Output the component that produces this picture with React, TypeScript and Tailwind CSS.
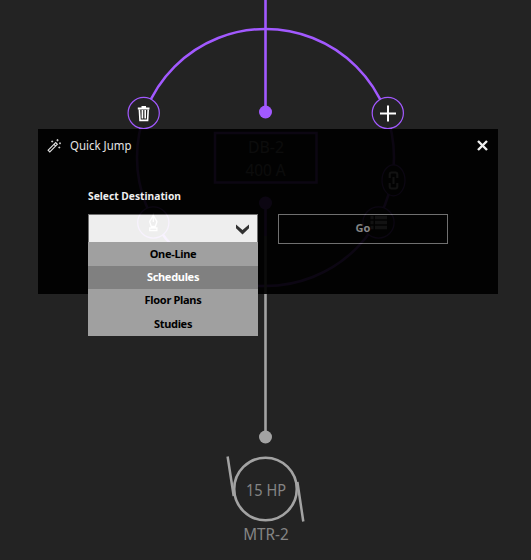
const purple = '#a259ff';
const gray = '#a3a3a3';

function Diagram() {
  return (
    <svg className="absolute inset-0" width="531" height="560" viewBox="0 0 531 560" fill="none">
      <circle cx="265.5" cy="157.5" r="128.5" stroke={purple} strokeWidth="2.5" />
      <path d="M265.5 0V112M265.5 203V236" stroke={purple} strokeWidth="2.6" />
      <circle cx="265.5" cy="112" r="6.5" fill={purple} />
      <circle cx="265.5" cy="203" r="6.5" fill={purple} />
      <rect x="215" y="133" width="101.5" height="49.5" fill="#232323" stroke={purple} strokeWidth="2.5" />
      <path d="M265.5 236V437" stroke={gray} strokeWidth="2.6" />
      <circle cx="265.5" cy="437" r="6.5" fill={gray} />
      <circle cx="265.5" cy="489" r="31.3" stroke={gray} strokeWidth="2.6" />
      <path d="M227.6 456.5L233.7 496M297.4 482L303.3 521.5" stroke={gray} strokeWidth="2.5" />
      <g fontFamily="'Noto Sans', sans-serif" fontSize="15.5" textAnchor="middle" fill="#858585">
        <text x="266" y="152.5" fill="#a3a3a3" textLength="36" lengthAdjust="spacingAndGlyphs">DB-2</text>
        <text x="265.5" y="176" fill="#a3a3a3" textLength="40" lengthAdjust="spacingAndGlyphs">400 A</text>
        <text x="266" y="495.5" textLength="40" lengthAdjust="spacingAndGlyphs">15 HP</text>
        <text x="266" y="540" textLength="45.5" lengthAdjust="spacingAndGlyphs">MTR-2</text>
      </g>
      <g fill="#232323" stroke={purple} strokeWidth="1.2">
        <circle cx="143.7" cy="113" r="15.6" />
        <circle cx="387.8" cy="113" r="15.6" />
        <circle cx="153.3" cy="222.5" r="15.6" />
        <circle cx="378.5" cy="222.5" r="15.6" />
        <ellipse cx="393.5" cy="180.3" rx="11.5" ry="15.5" />
      </g>
      <g stroke="#fff">
        <path d="M137.8 108.5H149.5M141.5 107H146" strokeWidth="1.8" />
        <path d="M139.4 109.5L140 120.4H147.6L148.2 109.5M142.4 110V118.5M145.2 110V118.5" strokeWidth="1.6" />
        <path d="M380 113.5H396M388 105.5V121.5" strokeWidth="2" />
        <path d="M153.3 215C152.5 218 149.7 220 149.7 222L151.3 226.5H155.3L156.9 222C156.9 220 154.1 218 153.3 215ZM153.3 217V222M149.7 228H156.9V230.5H149.7Z" strokeWidth="1.3" />
        <path d="M389.7 178V174.5Q389.7 172.5 391.7 172.5H395.3Q397.3 172.5 397.3 174.5V178M389.7 183V186.5Q389.7 188.5 391.7 188.5H395.3Q397.3 188.5 397.3 186.5V183M393.5 177V184" strokeWidth="2" />
        <path d="M370.5 217.5H373.5M370.5 222.5H373.5M370.5 227.5H373.5M375 217.5H387M375 222.5H387M375 227.5H387" strokeWidth="3.5" />
      </g>
    </svg>
  );
}

const options = ['One-Line', 'Schedules', 'Floor Plans', 'Studies'];

export default function App() {
  return (
    <main className="relative h-[560px] w-[531px] overflow-hidden bg-[#232323] pt-[129px] pl-[38px] font-['Noto_Sans',sans-serif]">
      <Diagram />
      <section className="relative h-[164.5px] w-[460px]">
        <div className="h-full w-full bg-black text-white opacity-[.925]">
          <header className="flex h-[33px] items-center pr-[10px] pl-[9px]">
            <svg width="15" height="15" viewBox="0 0 15 15" fill="none" stroke="#eee">
              <path d="M1.2 12.2L8.7 4.7L10.3 6.3L2.8 13.8ZM7 6.4L8.6 8" strokeWidth="1.2" />
              <path d="M5.2 2.5V4.500M4.200 3.500H6.200M10.500 1V3.400M9.300 2.200H11.700M13 4.300V6.300M12 5.300H14M12.300 8.500V10.500M11.300 9.500H13.300" strokeWidth=".8" />
            </svg>
            <svg className="ml-2 overflow-visible" width="63" height="18" fill="#f4f4f4" fontSize="12">
              <text x="0" y="13" textLength="61.5" lengthAdjust="spacingAndGlyphs">Quick Jump</text>
            </svg>
            <svg className="mb-px ml-auto" width="11" height="11" viewBox="0 0 11 11" stroke="#fff" strokeWidth="2.4">
              <path d="M1 1L10 10M10 1L1 10" />
            </svg>
          </header>
          <div className="px-[50px] pt-6">
            <svg width="120" height="20" className="block overflow-visible" fill="#fff" fontSize="11" fontWeight="700">
              <text x="0" y="13.5" textLength="93" lengthAdjust="spacingAndGlyphs">Select Destination</text>
            </svg>
            <div className="mt-[7.5px] flex gap-5">
              <button className="flex h-[30px] w-[170px] items-center justify-end border border-[#777] bg-white pt-0.5 pr-2">
                <svg width="13" height="11" viewBox="0 0 13 11" fill="#333">
                  <path d="M0 0.5L6.5 6L13 0.5V4.3L6.5 10.5L0 4.3Z" />
                </svg>
              </button>
              <button className="h-[30px] w-[170px] border border-[#777] pb-px text-[11px] font-bold text-[#8c8c8c]">Go</button>
            </div>
          </div>
        </div>
        <ul className="absolute top-[113px] left-[50px] h-[93.5px] w-[170px] bg-[#a0a0a0] pt-px text-center text-[11px] font-bold tracking-[-0.3px]">
          {options.map((label) => (
            <li
              key={label}
              className={label === 'Schedules' ? 'h-[23.2px] bg-[#808080] leading-[21.5px] text-white' : 'h-[23.2px] leading-[21.5px] text-black'}
            >
              {label}
            </li>
          ))}
        </ul>
      </section>
    </main>
  );
}
